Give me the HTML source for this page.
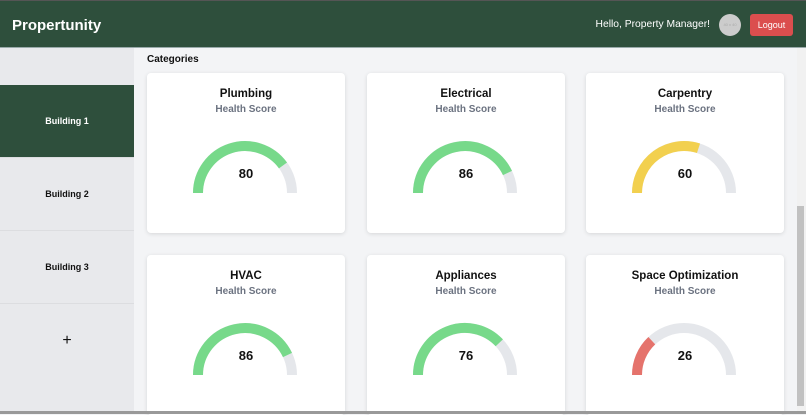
<!DOCTYPE html>
<html><head><meta charset="utf-8"><style>
*{box-sizing:border-box;margin:0;padding:0}
body{width:806px;height:414px;overflow:hidden;background:#f3f4f6;font-family:"Liberation Sans",Arial,sans-serif;position:relative}
.hdr{position:absolute;left:0;top:0;width:806px;height:48px;background:#2e4f3c;border-top:1px solid #555;border-bottom:1px solid #9aa}
.logo{position:absolute;left:12px;top:16px;color:#fff;font-weight:bold;font-size:15px}
.hello{position:absolute;right:96px;top:18px;color:#fff;font-size:10.3px;white-space:nowrap}
.av{position:absolute;left:719px;top:13px;width:22px;height:22px;border-radius:50%;background:#ccc;color:#aaa;font-size:4px;text-align:center;line-height:22px}
.lo{position:absolute;left:750px;top:13px;width:43px;height:22px;border-radius:3px;background:#db4e4e;color:#fff;font-size:9px;text-align:center;line-height:22px}
.side{position:absolute;left:0;top:48px;width:134px;height:366px;background:#e8e9ec}
.b{position:absolute;left:0;width:134px;height:73px;font-size:9px;font-weight:bold;color:#111;text-align:center;line-height:73px;border-bottom:1px solid #dcdde0}
.act{background:#2e4f3c;color:#fff}
.cat{position:absolute;left:147px;top:54px;font-size:10px;font-weight:bold;color:#111}
.card{position:absolute;width:198px;height:160px;background:#fff;border-radius:4px;box-shadow:0 1px 4px rgba(0,0,0,.12)}
.card h3{position:absolute;top:15px;width:100%;text-align:center;font-size:11.5px;color:#111}
.card p{position:absolute;top:31px;width:100%;text-align:center;font-size:10px;font-weight:bold;color:#6b7280}
.card svg{position:absolute;left:0;top:0}
.num{position:absolute;top:93px;width:100%;text-align:center;font-size:13px;font-weight:bold;color:#111}
.sb{position:absolute;left:797px;top:48px;width:9px;height:366px;background:#f1f1f1}
.th{position:absolute;left:797px;top:206px;width:7px;height:200px;background:#c1c1c1}
.bl{position:absolute;left:0;top:411px;width:806px;height:3px;background:#999}
</style></head><body>
<div class="hdr"><div class="logo">Propertunity</div><div class="hello">Hello, Property Manager!</div><div class="av">40 x 40</div><div class="lo">Logout</div></div>
<div class="side">
<div class="b act" style="top:37px">Building 1</div>
<div class="b" style="top:110px">Building 2</div>
<div class="b" style="top:183px">Building 3</div>
<div class="b" style="top:256px;font-size:16px;font-weight:normal;border:0">+</div>
</div>
<div class="cat">Categories</div>

<div class="card" style="left:147px;top:73px"><h3>Plumbing</h3><p>Health Score</p><svg width="198" height="160"><path d="M51 120A47 47 0 0 1 145 120" fill="none" stroke="#e5e7eb" stroke-width="10"/><path d="M51 120A47 47 0 0 1 136 92.4" fill="none" stroke="#77d98a" stroke-width="10"/></svg><div class="num">80</div></div>
<div class="card" style="left:367px;top:73px"><h3>Electrical</h3><p>Health Score</p><svg width="198" height="160"><path d="M51 120A47 47 0 0 1 145 120" fill="none" stroke="#e5e7eb" stroke-width="10"/><path d="M51 120A47 47 0 0 1 140.5 100" fill="none" stroke="#77d98a" stroke-width="10"/></svg><div class="num">86</div></div>
<div class="card" style="left:586px;top:73px"><h3>Carpentry</h3><p>Health Score</p><svg width="198" height="160"><path d="M51 120A47 47 0 0 1 145 120" fill="none" stroke="#e5e7eb" stroke-width="10"/><path d="M51 120A47 47 0 0 1 112.5 75.3" fill="none" stroke="#f2d04f" stroke-width="10"/></svg><div class="num">60</div></div>

<div class="card" style="left:147px;top:255px"><h3>HVAC</h3><p>Health Score</p><svg width="198" height="160"><path d="M51 120A47 47 0 0 1 145 120" fill="none" stroke="#e5e7eb" stroke-width="10"/><path d="M51 120A47 47 0 0 1 140.5 100" fill="none" stroke="#77d98a" stroke-width="10"/></svg><div class="num">86</div></div>
<div class="card" style="left:367px;top:255px"><h3>Appliances</h3><p>Health Score</p><svg width="198" height="160"><path d="M51 120A47 47 0 0 1 145 120" fill="none" stroke="#e5e7eb" stroke-width="10"/><path d="M51 120A47 47 0 0 1 132.3 87.8" fill="none" stroke="#77d98a" stroke-width="10"/></svg><div class="num">76</div></div>
<div class="card" style="left:586px;top:255px"><h3>Space Optimization</h3><p>Health Score</p><svg width="198" height="160"><path d="M51 120A47 47 0 0 1 145 120" fill="none" stroke="#e5e7eb" stroke-width="10"/><path d="M51 120A47 47 0 0 1 65.8 85.7" fill="none" stroke="#e5736c" stroke-width="10"/></svg><div class="num">26</div></div>

<div class="sb"></div><div class="th"></div><div class="bl"></div>
</body></html>
